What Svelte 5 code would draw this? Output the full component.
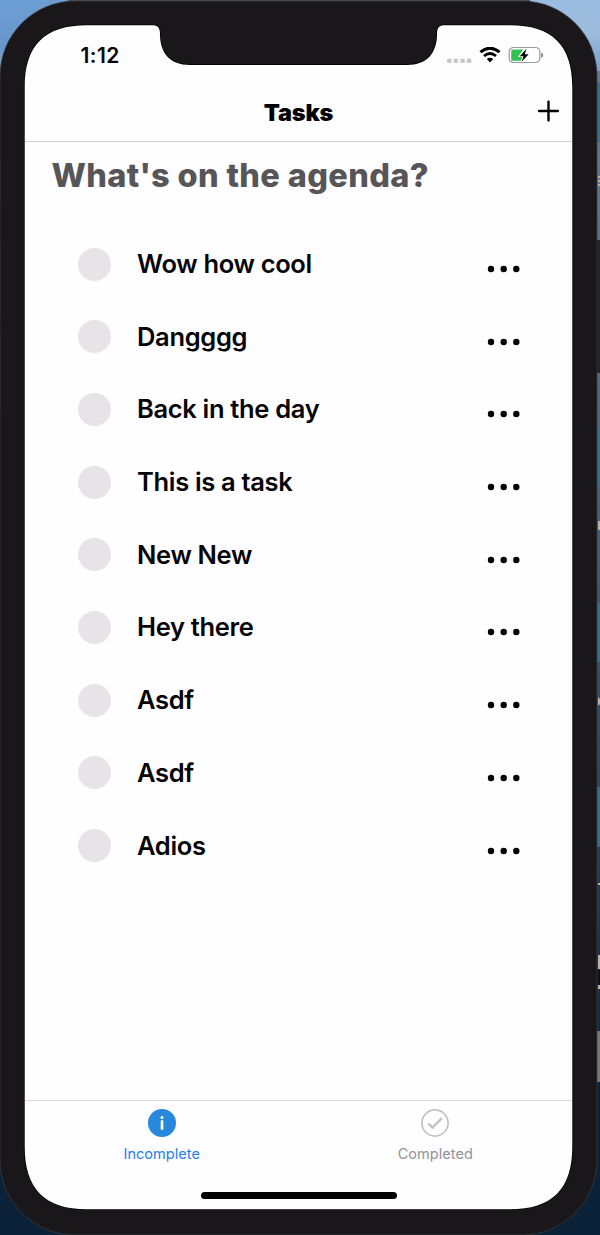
<script>
  const tasks = [
    'Wow how cool',
    'Dangggg',
    'Back in the day',
    'This is a task',
    'New New',
    'Hey there',
    'Asdf',
    'Asdf',
    'Adios'
  ];
</script>

<div class="desktop">
  <svg class="backdrop" width="600" height="1235" viewBox="0 0 600 1235" aria-hidden="true">
    <defs>
      <linearGradient id="sky" x1="0" y1="0" x2="0" y2="1">
        <stop offset="0" stop-color="#6c9ed3" />
        <stop offset="0.6" stop-color="#6697cb" />
        <stop offset="1" stop-color="#9aacc2" />
      </linearGradient>
      <linearGradient id="skyRight" x1="0" y1="0" x2="0" y2="1">
        <stop offset="0" stop-color="#9bbce0" />
        <stop offset="0.4" stop-color="#9dbcde" />
        <stop offset="1" stop-color="#6f9bca" />
      </linearGradient>
      <linearGradient id="sea" x1="0" y1="0" x2="0" y2="1">
        <stop offset="0" stop-color="#66788c" />
        <stop offset="0.4" stop-color="#48637b" />
        <stop offset="1" stop-color="#10263d" />
      </linearGradient>
    </defs>
    <rect width="600" height="1235" fill="#0b2138" />
    <rect width="300" height="80" fill="url(#sky)" />
    <rect x="300" width="300" height="80" fill="url(#skyRight)" />
    <rect x="68" width="462" height="3" fill="#48525c" />
    <rect x="590" y="71" width="10" height="1000" fill="url(#sea)" />
    <g fill="#356d90">
      <rect x="596" y="82" width="4" height="60" />
      <rect x="596" y="427" width="4" height="60" />
      <rect x="596" y="603" width="4" height="59" />
      <rect x="596" y="787" width="4" height="60" />
    </g>
    <g fill="#b4b2b1">
      <rect x="598" y="176" width="2" height="2" />
      <rect x="598" y="180" width="2" height="2" />
      <rect x="598" y="184" width="2" height="2" />
      <rect x="598" y="521" width="2" height="9" />
      <path d="M598 697l2 2v5l-2 2z" />
      <rect x="598" y="883" width="2" height="2" />
      <rect x="598" y="955" width="2" height="14" />
      <rect x="598" y="985" width="2" height="4" />
    </g>
    <rect x="597" y="970" width="3" height="15" fill="#101114" />
    <rect x="597" y="1031" width="3" height="51" fill="#777" />
    <path d="M75 1H522A75 75 0 0 1 597 76V1160A75 75 0 0 1 522 1235H75A75 75 0 0 1 0 1160V76A75 75 0 0 1 75 1Z" fill="#19171a" stroke="#3d3f43" stroke-width="0.7" />
    <rect x="596" y="240" width="4" height="133" fill="#252427" />
    <rect x="0" y="160" width="1" height="41" fill="#29282b" />
    <rect x="0" y="241" width="1" height="78" fill="#29282b" />
    <rect x="0" y="333" width="1" height="78" fill="#29282b" />
    <path
      d="M87 25.2H152C158 25.2 160 27.500 160 34C160 53 170 65 190 65H407C427 65 437 53 437 34C437 27.500 439 25.200 445 25.200H510C552 25.200 572.300 45 572.300 87V1147C572.300 1189 552 1209.300 510 1209.300H87C45 1209.300 24.700 1189 24.700 1147V87C24.700 45 45 25.200 87 25.200Z"
      fill="#fefdff" stroke="#000" stroke-width="1.6" paint-order="stroke"
    />
  </svg>

  <main class="screen">
    <div class="status">
      <span class="time">1:12</span>
      <div class="indicators">
        <svg width="26" height="6" viewBox="0 0 26 6" fill="#c7c7c9">
          <rect x="0" y="0.500" width="4.600" height="4.500" rx="1.500" />
          <rect x="6.600" y="0.500" width="4.600" height="4.500" rx="1.500" />
          <rect x="13.200" y="0.500" width="4.600" height="4.500" rx="1.500" />
          <rect x="19.800" y="0.500" width="4.600" height="4.500" rx="1.500" />
        </svg>
        <svg class="wifi" width="22" height="16" viewBox="0 0 22 16">
          <path d="M1.400 5.200Q11 -2.800 20.600 5.200" fill="none" stroke="#000" stroke-width="3" />
          <path d="M5 9Q11 3.900 17 9" fill="none" stroke="#000" stroke-width="2.800" />
          <path d="M7.800 12Q11 9.600 14.200 12L11 15.400Z" />
        </svg>
        <svg class="battery" width="36" height="18" viewBox="0 0 36 18">
          <rect x="1.200" y="1.500" width="30.600" height="15" rx="4.300" fill="#fff" stroke="#9c9b9e" stroke-width="1.200" />
          <path d="M4.800 3.500H15.300L10.800 10H14.300L13.300 14.800H4.800Q3.200 14.800 3.200 13.200V5.200Q3.200 3.500 4.800 3.500Z" fill="#30c14e" />
          <path d="M33.200 6.400Q35.100 7.200 35.100 9.200Q35.100 11.200 33.200 11.900Z" fill="#858488" />
          <path d="M18.500 2.700L11.800 10.200H15.500L13.700 15.700L20.700 8.200H16.800Z" fill="#000" stroke="#fff" stroke-width="1.800" paint-order="stroke" />
        </svg>
      </div>
    </div>

    <header class="nav">
      <h1>Tasks</h1>
      <button class="add" aria-label="Add task">
        <svg width="22" height="22" viewBox="0 0 22 22">
          <path d="M11.500 1.600V20.400M2.100 11H20.900" stroke="#000" stroke-width="2.400" stroke-linecap="round" />
        </svg>
      </button>
    </header>

    <section class="content">
      <h2>What's on the agenda?</h2>
      <ul>
        {#each tasks as task}
          <li>
            <span class="check"></span>
            <span class="label">{task}</span>
            <svg class="more" width="34" height="8" viewBox="0 0 34 8">
              <circle cx="4" cy="4" r="3.200" />
              <circle cx="16.700" cy="4" r="3.200" />
              <circle cx="29.300" cy="4" r="3.200" />
            </svg>
          </li>
        {/each}
      </ul>
    </section>

    <nav class="tabs">
      <div class="tab active">
        <svg width="28" height="28" viewBox="0 0 28 28">
          <circle cx="14" cy="14" r="14" fill="#2888dc" />
          <circle cx="14" cy="8.500" r="1.500" fill="#fff" />
          <path d="M12.700 11.300H15.300V20.700H12.700Z" fill="#fff" />
        </svg>
        <span>Incomplete</span>
      </div>
      <div class="tab">
        <svg width="28" height="28" viewBox="0 0 28 28" fill="none" stroke="#c2c1c5">
          <circle cx="14" cy="14" r="13.100" stroke-width="1.700" />
          <path d="M8.200 15.300L11.500 18.600L20 10" stroke-width="2.300" stroke-linecap="square" />
        </svg>
        <span>Completed</span>
      </div>
    </nav>
    <div class="home"></div>
  </main>
</div>

<style>
  .desktop {
    position: relative;
    width: 600px;
    height: 1235px;
    overflow: hidden;
    box-sizing: border-box;
    padding: 25px 0 0 25px;
    font-family: Inter, 'Liberation Sans', sans-serif;
    color: #050505;
  }
  .backdrop {
    position: absolute;
    inset: 0;
  }
  .screen {
    position: relative;
    width: 547px;
    height: 1184px;
    display: flex;
    flex-direction: column;
  }
  .status {
    height: 60px;
    flex: none;
    display: flex;
    justify-content: space-between;
    box-sizing: border-box;
    padding: 18px 28px 0 55.500px;
  }
  .time {
    font-size: 21px;
    line-height: 25px;
    font-weight: 600;
    letter-spacing: 0.45px;
  }
  .indicators {
    display: flex;
    align-items: flex-start;
  }
  .indicators svg:first-child {
    margin-top: 15px;
  }
  .wifi {
    margin: 4px 7px 0 6px;
  }
  .battery {
    margin-top: 3px;
  }
  .nav {
    height: 57px;
    flex: none;
    box-sizing: border-box;
    border-bottom: 1px solid #cfced2;
    display: grid;
    grid-template-columns: 1fr auto 1fr;
    align-items: center;
  }
  h1 {
    grid-column: 2;
    margin: 0;
    font-size: 23.5px;
    line-height: 30px;
    font-weight: 900;
    letter-spacing: -0.15px;
    color: #000;
  }
  .add {
    justify-self: end;
    display: flex;
    margin: -5px 13px 0 0;
    padding: 0;
    border: 0;
    background: none;
  }
  .content {
    flex: 1;
    padding: 14px 51.500px 0 26.500px;
  }
  h2 {
    margin: 0;
    font-size: 32.5px;
    line-height: 40px;
    font-weight: 850;
    letter-spacing: 0.36px;
    color: #575557;
    white-space: nowrap;
  }
  ul {
    list-style: none;
    margin: 31.700px 0 0;
    padding: 0 0 0 26px;
  }
  li {
    height: 72.700px;
    display: flex;
    align-items: center;
  }
  .check {
    width: 33px;
    height: 33px;
    border-radius: 50%;
    background: #e8e3e7;
  }
  .label {
    margin-left: 26.500px;
    font-size: 25.500px;
    line-height: 32px;
    font-weight: 600;
    letter-spacing: -0.33px;
  }
  .more {
    margin: 10px 0 0 auto;
  }
  .tabs {
    height: 78px;
    flex: none;
    box-sizing: border-box;
    border-top: 1.500px solid #d9dbdd;
    padding-top: 8px;
    display: grid;
    grid-template-columns: 1fr 1fr;
  }
  .tab {
    display: flex;
    flex-direction: column;
    align-items: center;
    gap: 8px;
    font-size: 14.500px;
    line-height: 18px;
    letter-spacing: 0.05px;
    color: #929195;
  }
  .active {
    color: #1c7ef2;
  }
  .home {
    width: 196px;
    height: 7px;
    flex: none;
    border-radius: 4px;
    background: #000;
    margin: 14px auto 10px;
  }
</style>
